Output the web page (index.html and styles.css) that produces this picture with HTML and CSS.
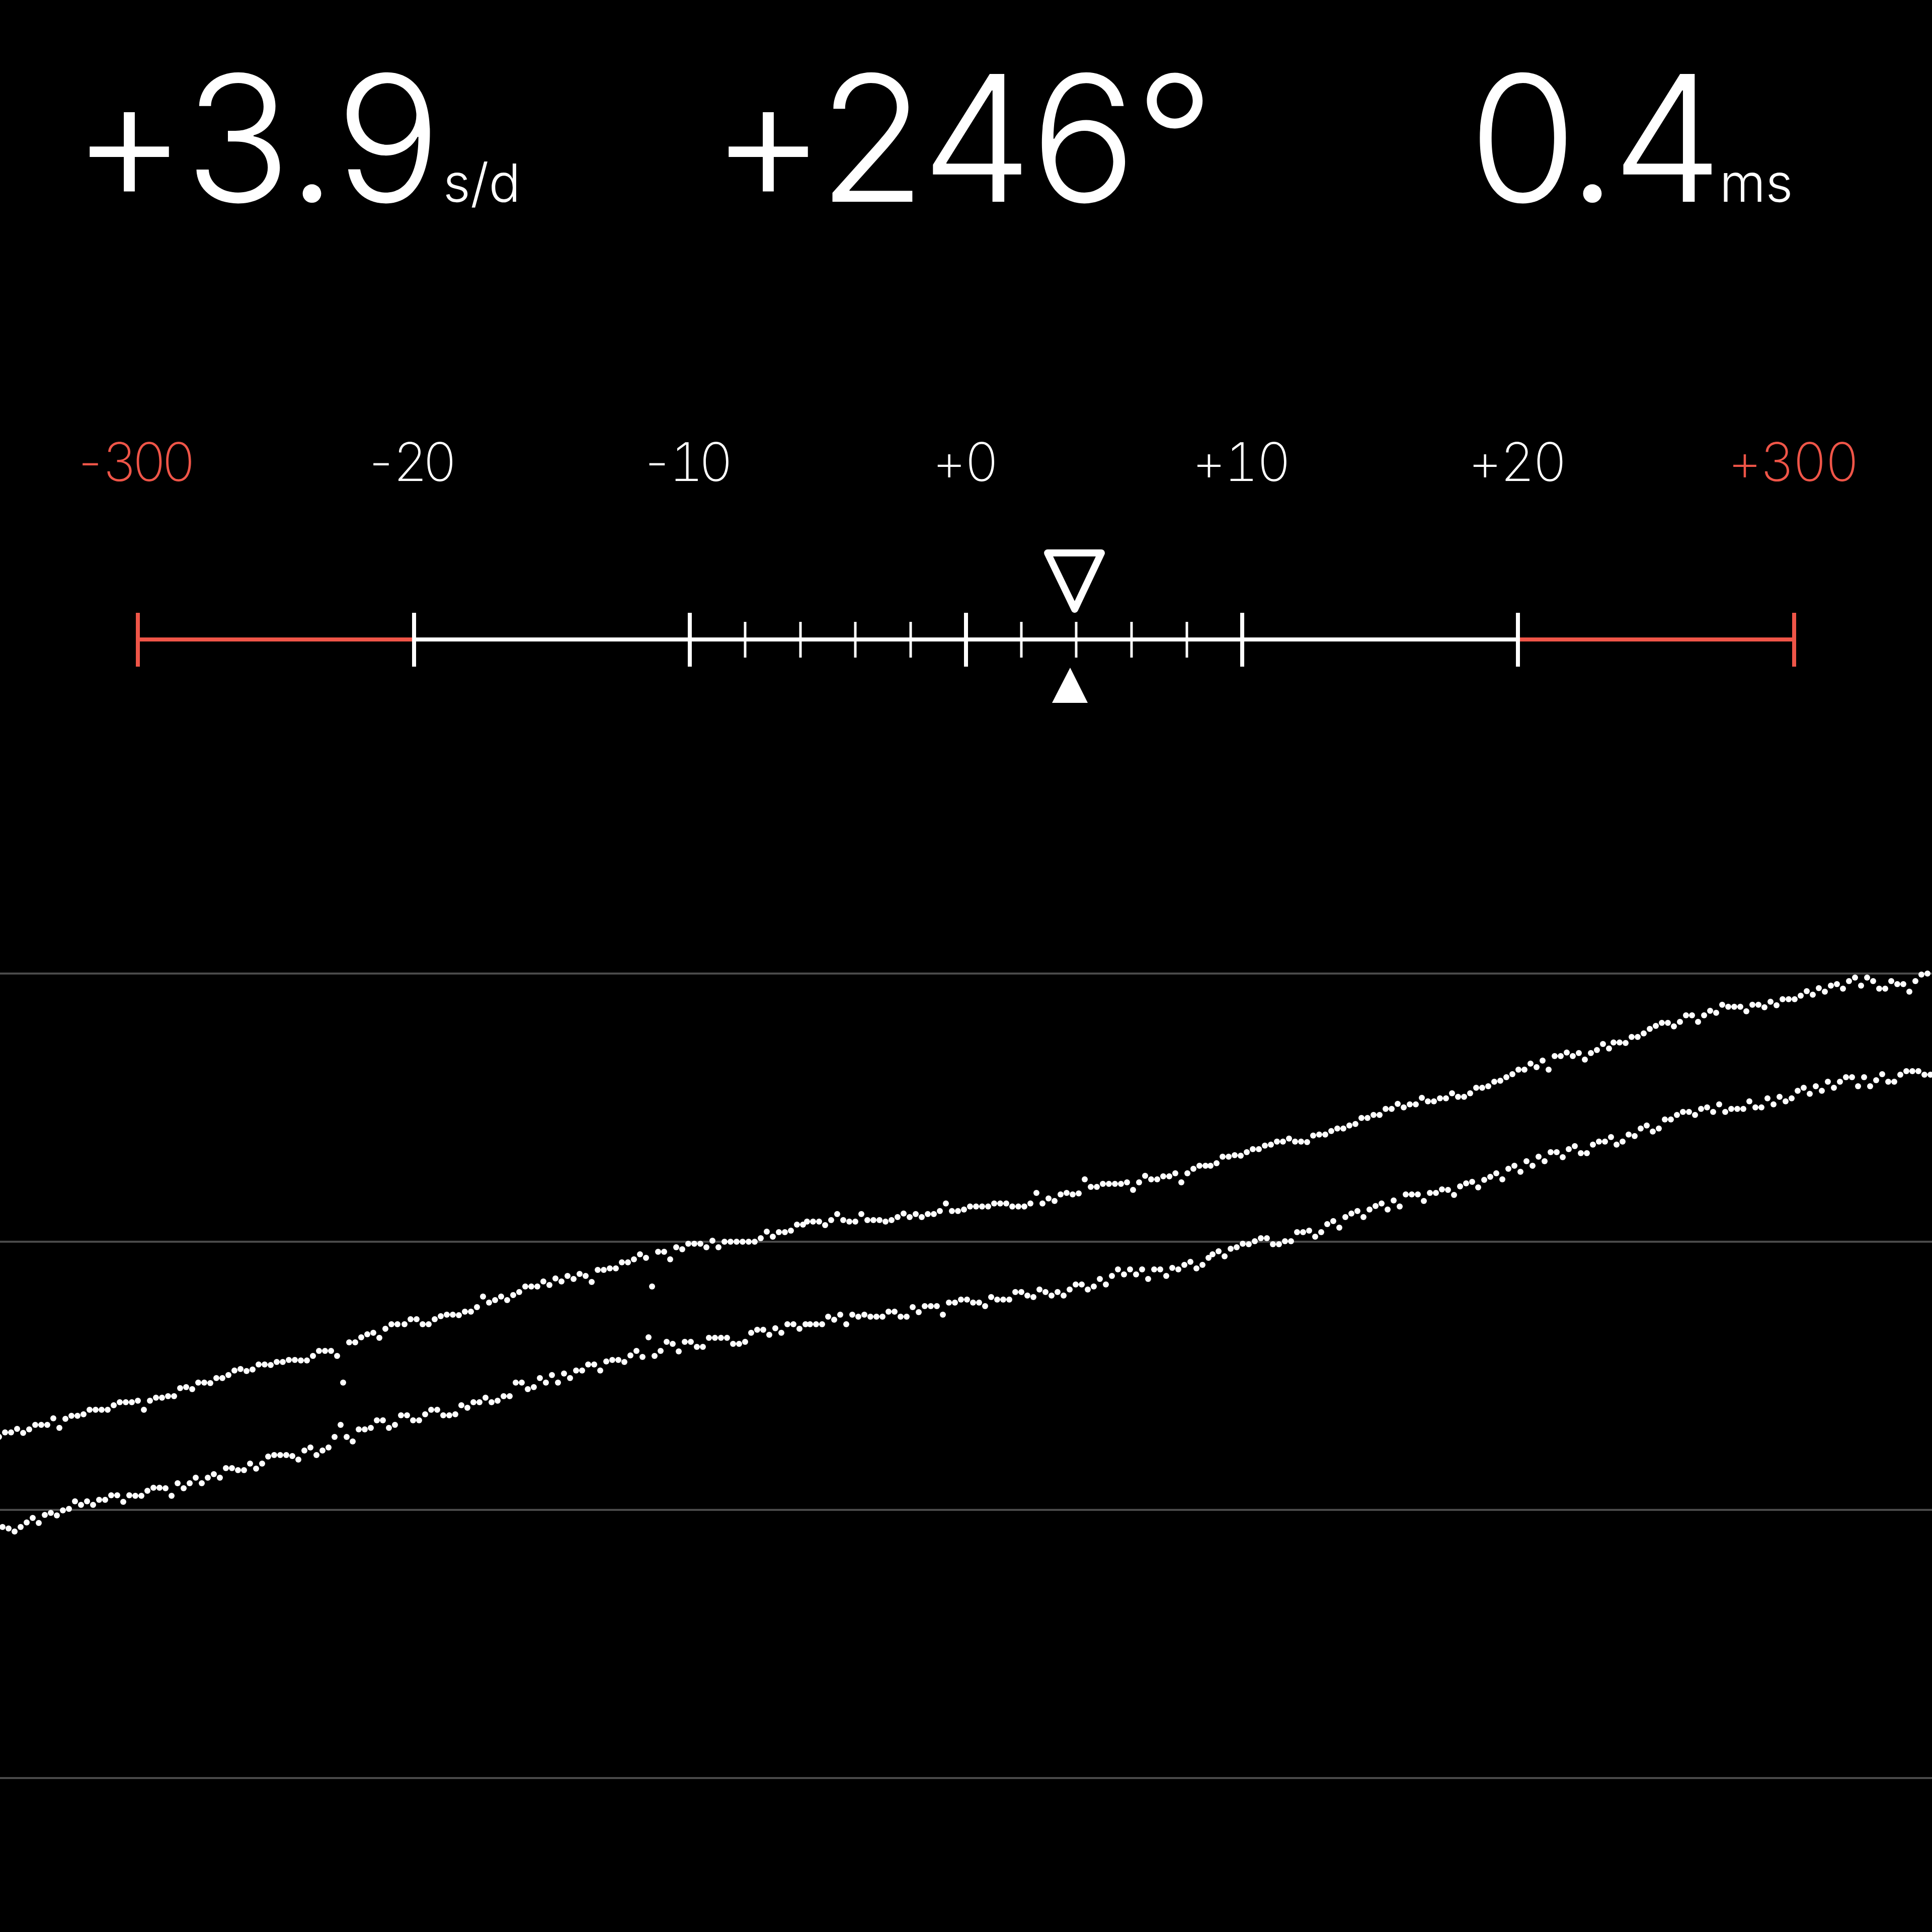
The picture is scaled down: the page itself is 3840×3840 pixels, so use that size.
FILE: index.html
```html
<!DOCTYPE html>
<html lang="en">
<head>
    <meta charset="UTF-8">
    <title>Timegrapher</title>
    <link rel="stylesheet" href="styles.css">
</head>
<body>
    <div class="stats">
        <div class="stat stat-rate"><span class="value">+3.9</span><span class="unit">s/d</span></div>
        <div class="stat stat-lift"><span class="value">+246°</span></div>
        <div class="stat stat-error"><span class="value">0.4</span><span class="unit">ms</span></div>
    </div>

    <div class="labels">
        <span class="label neg red">-300</span>
        <span class="label neg">-20</span>
        <span class="label neg">-10</span>
        <span class="label">+0</span>
        <span class="label">+10</span>
        <span class="label">+20</span>
        <span class="label red">+300</span>
    </div>

    <svg class="ruler" viewBox="0 1080 3840 330" width="3840" height="330">
        <polygon class="marker-open" points="2082,1099 2189,1099 2136,1211"/>
        <line class="bar" x1="823" y1="1271" x2="3017" y2="1271"/>
        <line class="bar bar-red" x1="274" y1="1271" x2="823" y2="1271"/>
        <line class="bar bar-red" x1="3017" y1="1271" x2="3566" y2="1271"/>

        <line class="tick minor" x1="1481" y1="1236" x2="1481" y2="1307"/>
        <line class="tick minor" x1="1591" y1="1236" x2="1591" y2="1307"/>
        <line class="tick minor" x1="1700" y1="1236" x2="1700" y2="1307"/>
        <line class="tick minor" x1="1810" y1="1236" x2="1810" y2="1307"/>
        <line class="tick minor" x1="2030" y1="1236" x2="2030" y2="1307"/>
        <line class="tick minor" x1="2139" y1="1236" x2="2139" y2="1307"/>
        <line class="tick minor" x1="2249" y1="1236" x2="2249" y2="1307"/>
        <line class="tick minor" x1="2359" y1="1236" x2="2359" y2="1307"/>

        <line class="tick major tick-red" x1="274" y1="1218" x2="274" y2="1325"/>
        <line class="tick major" x1="823" y1="1218" x2="823" y2="1325"/>
        <line class="tick major" x1="1371" y1="1218" x2="1371" y2="1325"/>
        <line class="tick major" x1="1920" y1="1218" x2="1920" y2="1325"/>
        <line class="tick major" x1="2469" y1="1218" x2="2469" y2="1325"/>
        <line class="tick major" x1="3017" y1="1218" x2="3017" y2="1325"/>
        <line class="tick major tick-red" x1="3566" y1="1218" x2="3566" y2="1325"/>

        <polygon class="marker-solid" points="2127,1327 2162,1397 2091,1397"/>
    </svg>

    <svg class="chart" id="chart" viewBox="0 1900 3840 1700" width="3840" height="1700">
        <line class="grid" x1="0" y1="1935" x2="3840" y2="1935"/>
        <line class="grid" x1="0" y1="2468" x2="3840" y2="2468"/>
        <line class="grid" x1="0" y1="3001" x2="3840" y2="3001"/>
        <line class="grid" x1="0" y1="3534" x2="3840" y2="3534"/>
    </svg>

    <script src="app.js"></script>
</body>
</html>
```

FILE: styles.css
```css
html, body {
    margin: 0;
    background-color: #000;
}
body {
    width: 3840px;
    height: 3840px;
    overflow: hidden;
    color: #fff;
    font-family: Inter, Roboto, "Liberation Sans", sans-serif;
    font-weight: 300;
    font-variant-ligatures: no-contextual;
}
.stats {
    display: grid;
    grid-template-columns: 1270px 1506px auto;
    height: 479px;
    padding-left: 143px;
}
.stat {
    display: flex;
    align-items: baseline;
    padding-top: 74px;
}
.value {
    font-size: 349px;
    line-height: 400px;
}
.stat-rate .value {
    letter-spacing: 0;
}
.stat-lift .value {
    letter-spacing: -3px;
}
.stat-error .value {
    letter-spacing: -10px;
}
.unit {
    margin-left: 4px;
    font-size: 105px;
}
.labels {
    display: grid;
    grid-template-columns: repeat(7, 1fr);
    margin-top: 379px;
    text-align: center;
}
.label {
    padding-right: 6px;
    font-size: 106px;
    line-height: 120px;
    font-weight: 200;
    font-variant-numeric: tabular-nums;
    letter-spacing: -4px;
}
.neg {
    padding-right: 24px;
    letter-spacing: -10px;
}
.red {
    color: #ef5548;
}
.ruler {
    display: block;
    margin-top: 102px;
}
.chart {
    display: block;
    margin-top: 490px;
}
.bar {
    stroke: #fff;
    stroke-width: 8;
}
.bar-red {
    stroke: #ef5548;
}
.tick {
    stroke: #fff;
}
.major {
    stroke-width: 8;
}
.minor {
    stroke-width: 5;
}
.tick-red {
    stroke: #ef5548;
}
.marker-open {
    fill: none;
    stroke: #fff;
    stroke-width: 14;
    stroke-linejoin: round;
}
.marker-solid {
    fill: #fff;
}
.grid {
    stroke: #4a4a4a;
    stroke-width: 4;
}
.dot {
    fill: #fff;
}
```

FILE: app.js
```js
// rate trace, two beats per sample, 12px apart
const runs = [
    { x: -2, ys: [2856, 2847, 2847, 2840, 2848, 2841, 2832, 2832, 2832, 2819, 2838, 2820, 2814, 2814, 2811, 2802, 2802, 2802, 2802, 2793, 2787, 2787, 2787, 2784, 2802, 2784, 2778, 2778, 2775, 2775, 2759, 2757, 2761, 2748, 2748, 2749, 2739, 2739, 2733, 2724, 2721, 2725, 2722, 2712, 2712, 2713, 2707, 2707, 2703, 2703, 2704, 2704, 2695, 2685, 2685, 2685, 2695, 2748, 2668, 2668, 2658, 2652, 2649, 2659, 2641, 2632, 2632] },
    { x: 804, ys: [2632, 2622, 2622, 2632, 2632, 2622, 2616, 2613, 2613, 2614, 2607, 2607, 2598, 2577, 2589, 2584, 2577, 2584, 2574, 2568, 2557, 2557, 2557, 2547, 2554, 2541, 2547, 2536, 2542, 2532, 2536, 2548, 2524, 2524, 2521, 2521, 2509, 2509, 2503, 2493, 2500, 2557, 2488, 2488, 2503, 2479, 2483, 2472, 2472, 2472, 2479, 2466, 2479, 2468, 2468, 2468, 2468, 2468, 2468, 2461, 2448, 2458, 2449, 2449, 2446, 2434, 2434] },
    { x: 1604, ys: [2428, 2428, 2428, 2435, 2425, 2413, 2425, 2428, 2428, 2413, 2425, 2425, 2425, 2428, 2425, 2419, 2412, 2419, 2413, 2419, 2413, 2413, 2407, 2392, 2407, 2407, 2404, 2398, 2398, 2398, 2398, 2392, 2392, 2392, 2398, 2398, 2398, 2392, 2371, 2392, 2382, 2387, 2374, 2371, 2374, 2372, 2344, 2359, 2359, 2353, 2353, 2353, 2353, 2350, 2365, 2350, 2337, 2344, 2344, 2338, 2338, 2332, 2350, 2332, 2323, 2317, 2317] },
    { x: 2406, ys: [2317, 2312, 2299, 2299, 2296, 2297, 2290, 2284, 2284, 2277, 2275, 2269, 2269, 2263, 2269, 2269, 2270, 2257, 2255, 2255, 2248, 2243, 2243, 2237, 2234, 2222, 2222, 2216, 2216, 2204, 2204, 2194, 2201, 2195, 2195, 2182, 2189, 2189, 2183, 2183, 2173, 2180, 2180, 2173, 2162, 2162, 2159, 2150, 2148, 2141, 2135, 2126, 2126, 2114, 2121, 2108, 2126, 2099, 2099, 2092, 2099, 2093, 2106, 2093, 2087, 2075, 2084] },
    { x: 3207, ys: [2072, 2072, 2073, 2061, 2061, 2054, 2045, 2039, 2033, 2033, 2040, 2031, 2018, 2018, 2031, 2018, 2009, 2013, 1997, 2001, 2001, 2001, 2010, 1997, 1997, 2002, 1991, 1998, 1986, 1986, 1986, 1979, 1970, 1977, 1964, 1971, 1959, 1956, 1965, 1950, 1943, 1959, 1943, 1950, 1965, 1965, 1950, 1956, 1956, 1971, 1950, 1937, 1935] },

    { x: 5, ys: [3035, 3038, 3044, 3035, 3026, 3017, 3027, 3011, 3007, 3012, 3002, 2999, 2984, 2991, 2984, 2991, 2981, 2981, 2972, 2972, 2985, 2972, 2973, 2973, 2963, 2957, 2957, 2958, 2973, 2948, 2958, 2948, 2937, 2948, 2937, 2930, 2937, 2918, 2918, 2922, 2922, 2909, 2919, 2909, 2895, 2892, 2892, 2892, 2894, 2901, 2883, 2877, 2892, 2883, 2877, 2856, 2832, 2856, 2865, 2841, 2841, 2838, 2823, 2823, 2838, 2832, 2813] },
    { x: 809, ys: [2813, 2823, 2823, 2811, 2802, 2802, 2813, 2813, 2811, 2793, 2798, 2787, 2787, 2778, 2787, 2784, 2775, 2775, 2748, 2748, 2761, 2757, 2739, 2748, 2733, 2748, 2730, 2739, 2724, 2724, 2712, 2712, 2724, 2706, 2703, 2703, 2707, 2694, 2685, 2697, 2658, 2695, 2685, 2667, 2671, 2686, 2667, 2667, 2677, 2677, 2659, 2659, 2659, 2659, 2671, 2671, 2667, 2649, 2643, 2643, 2653, 2640, 2649, 2632, 2632, 2641, 2632] },
    { x: 1610, ys: [2632, 2632, 2632, 2617, 2623, 2613, 2632, 2613, 2617, 2613, 2617, 2617, 2617, 2607, 2607, 2617, 2617, 2598, 2608, 2596, 2596, 2596, 2613, 2589, 2589, 2583, 2583, 2589, 2589, 2596, 2578, 2583, 2583, 2583, 2568, 2568, 2575, 2578, 2563, 2568, 2575, 2568, 2575, 2563, 2553, 2553, 2563, 2557, 2542, 2553, 2536, 2523, 2533, 2523, 2533, 2523, 2542, 2523, 2523, 2536, 2520, 2523, 2514, 2508, 2521, 2514, 2500] },
    { x: 2410, ys: [2493, 2487, 2497, 2482, 2479, 2472, 2473, 2467, 2461, 2461, 2473, 2473, 2467, 2467, 2449, 2449, 2446, 2458, 2449, 2433, 2427, 2440, 2419, 2412, 2407, 2419, 2404, 2397, 2392, 2404, 2386, 2398, 2374, 2374, 2374, 2387, 2371, 2371, 2364, 2365, 2375, 2358, 2352, 2349, 2360, 2345, 2339, 2332, 2344, 2323, 2317, 2329, 2308, 2317, 2299, 2308, 2290, 2290, 2300, 2284, 2278, 2292, 2292, 2275, 2269, 2269, 2260] },
    { x: 3213, ys: [2275, 2269, 2255, 2258, 2243, 2237, 2249, 2243, 2225, 2225, 2216, 2210, 2210, 2216, 2204, 2201, 2210, 2195, 2210, 2204, 2204, 2204, 2189, 2201, 2201, 2183, 2195, 2180, 2189, 2183, 2168, 2162, 2174, 2159, 2168, 2150, 2162, 2150, 2141, 2141, 2159, 2141, 2159, 2147, 2135, 2150, 2150, 2136, 2129, 2129, 2129, 2136, 2136] }
];

const chart = document.getElementById('chart');

runs.forEach(function(run) {
    run.ys.forEach(function(y, i) {
        const dot = document.createElementNS('http://www.w3.org/2000/svg', 'circle');
        dot.setAttribute('class', 'dot');
        dot.setAttribute('cx', run.x + i * 12);
        dot.setAttribute('cy', y);
        dot.setAttribute('r', 6);
        chart.appendChild(dot);
    });
});
```
